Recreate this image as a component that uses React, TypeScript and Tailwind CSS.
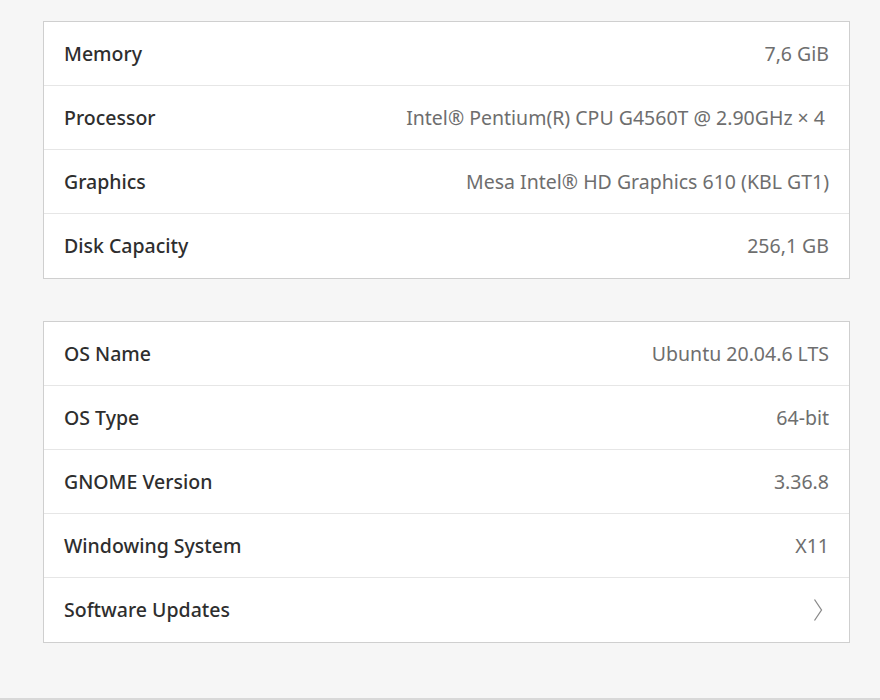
const HARDWARE = [
  { label: 'Memory', value: '7,6 GiB' },
  { label: 'Processor', value: 'Intel® Pentium(R) CPU G4560T @ 2.90GHz × 4', pad: true },
  { label: 'Graphics', value: 'Mesa Intel® HD Graphics 610 (KBL GT1)' },
  { label: 'Disk Capacity', value: '256,1 GB' },
];

const SOFTWARE = [
  { label: 'OS Name', value: 'Ubuntu 20.04.6 LTS' },
  { label: 'OS Type', value: '64-bit' },
  { label: 'GNOME Version', value: '3.36.8' },
  { label: 'Windowing System', value: 'X11' },
];

type Row = { label: string; value: string; pad?: boolean };

function InfoRow({ row }: { row: Row }) {
  return (
    <div className="flex h-[64px] items-center justify-between border-b border-[#e6e6e6] px-[20px] last:border-b-0">
      <span className="text-[19.5px] font-medium text-[#2e2e2e]">{row.label}</span>
      <span className={`text-[19.5px] text-[#6e6e6e] ${row.pad ? 'pr-[4px]' : ''}`}>{row.value}</span>
    </div>
  );
}

export default function App() {
  return (
    <div
      className="flex h-[700px] w-[880px] flex-col gap-[42px] border-b-2 border-[#d8d8d8] bg-[#f6f6f6] pl-[43px] pr-[30px] pt-[21px]"
      style={{ fontFamily: '"Noto Sans", "Open Sans", sans-serif' }}
    >
      <div className="flex flex-col border border-[#cfcfcf] bg-white">
        {HARDWARE.map((row) => (
          <InfoRow key={row.label} row={row} />
        ))}
      </div>

      <div className="flex flex-col border border-[#cfcfcf] bg-white">
        {SOFTWARE.map((row) => (
          <InfoRow key={row.label} row={row} />
        ))}
        <div className="flex h-[64px] items-center justify-between px-[20px]">
          <span className="text-[19.5px] font-medium text-[#2e2e2e]">Software Updates</span>
          <svg width="10" height="24" viewBox="0 0 10 24" className="mr-[6px]">
            <path d="M1.5 1.5 L8.5 12 L1.5 22.5" fill="none" stroke="#8a8a8a" strokeWidth="1.3" />
          </svg>
        </div>
      </div>
    </div>
  );
}
